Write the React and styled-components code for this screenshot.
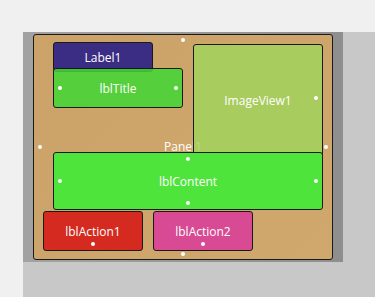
import React from "react";
import styled, { createGlobalStyle, css } from "styled-components";

const GlobalStyle = createGlobalStyle`
    html, body {
        margin: 0;
        background: #f0f0f0;
        font-family: "Open Sans", "Noto Sans", sans-serif;
    }
`;

const Workspace = styled.div`
    margin: 32px 0 0 23px;
    height: 265px;
    background: #c8c8c8;
`;

const Frame = styled.div`
    width: 320px;
    height: 230px;
    box-sizing: border-box;
    padding: 2px 10px;
    background: linear-gradient(90deg, #a2a2a2, #8e8e8e);
`;

// the form being designed: its controls are free-placed on this canvas
const Panel = styled.div`
    position: relative;
    width: 300px;
    height: 226px;
    box-sizing: border-box;
    border: 1px solid #1a1a1a;
    border-radius: 3px;
    background: linear-gradient(135deg, #cba369, #d0a86e);
`;

const Caption = styled.span`
    position: absolute;
    left: 0;
    right: 0;
    top: 105px;
    text-align: center;
    color: #fff;
    font-size: 12px;
    line-height: 14px;
`;

const Control = styled.div`
    position: absolute;
    left: ${(p) => p.$x}px;
    top: ${(p) => p.$y}px;
    width: ${(p) => p.$w}px;
    height: ${(p) => p.$h}px;
    box-sizing: border-box;
    border: 1px solid #1a1a1a;
    border-radius: 3px;
    background: ${(p) => p.$bg};
    color: #fff;
    font-size: 12px;
    display: flex;
    justify-content: center;
    align-items: ${(p) => (p.$top != null ? "flex-start" : "center")};
    padding-top: ${(p) => p.$top || 0}px;
`;

const dotPlace = {
    left: css`left: 4px; top: 50%; margin-top: -2px;`,
    right: css`right: 4px; top: 50%; margin-top: -2px;`,
    top: css`top: 4px; left: 50%; margin-left: -2px;`,
    bottom: css`bottom: 4px; left: 50%; margin-left: -2px;`,
};

const Dot = styled.i`
    position: absolute;
    width: 4px;
    height: 4px;
    border-radius: 50%;
    background: #fff;
    ${(p) => dotPlace[p.$at]}
    ${(p) => p.$y != null && css`top: ${p.$y}px;`}
`;

const App = () => {
    return (
        <>
            <GlobalStyle />
            <Workspace>
                <Frame>
                    <Panel>
                        <Caption>Panel1</Caption>
                        <Dot $at="top" $y={3} />
                        <Dot $at="bottom" style={{ bottom: 3 }} />
                        <Dot $at="left" />
                        <Dot $at="right" />
                        <Control $x={19} $y={7} $w={100} $h={30} $bg="#3b2d84" $top={6}>
                            Label1
                        </Control>
                        <Control $x={19} $y={33} $w={130} $h={40} $bg="rgba(66, 214, 52, 0.86)">
                            lblTitle
                            <Dot $at="left" />
                            <Dot $at="right" />
                        </Control>
                        <Control $x={159} $y={9} $w={130} $h={118} $bg="rgba(160, 212, 91, 0.82)" $top={47}>
                            ImageView1
                            <Dot $at="right" $y={53} />
                        </Control>
                        <Control $x={19} $y={117} $w={270} $h={58} $bg="#4ee43c">
                            lblContent
                            <Dot $at="top" />
                            <Dot $at="bottom" />
                            <Dot $at="left" />
                            <Dot $at="right" />
                        </Control>
                        <Control $x={9} $y={176} $w={100} $h={40} $bg="#d52a20">
                            lblAction1
                            <Dot $at="bottom" />
                        </Control>
                        <Control $x={119} $y={176} $w={100} $h={40} $bg="#d84a93">
                            lblAction2
                            <Dot $at="bottom" />
                        </Control>
                    </Panel>
                </Frame>
            </Workspace>
        </>
    );
};

export default App;
